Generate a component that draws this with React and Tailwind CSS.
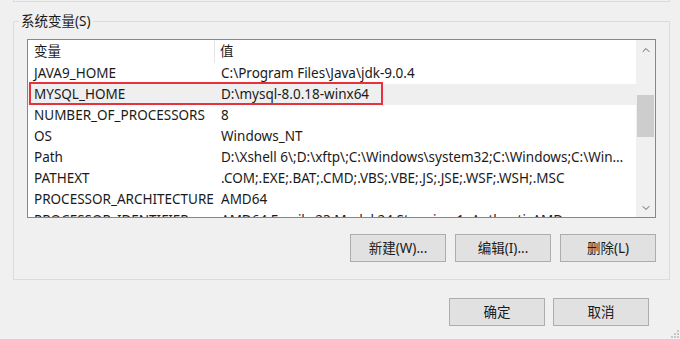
import { ChevronUp, ChevronDown } from 'lucide-react'

const ROWS = [
  ['JAVA9_HOME', 'C:\\Program Files\\Java\\jdk-9.0.4'],
  ['MYSQL_HOME', 'D:\\mysql-8.0.18-winx64'],
  ['NUMBER_OF_PROCESSORS', '8'],
  ['OS', 'Windows_NT'],
  ['Path', 'D:\\Xshell 6\\;D:\\xftp\\;C:\\Windows\\system32;C:\\Windows;C:\\Windows\\System32\\Wbem;C:\\Windows\\System32\\WindowsPowerShell'],
  ['PATHEXT', '.COM;.EXE;.BAT;.CMD;.VBS;.VBE;.JS;.JSE;.WSF;.WSH;.MSC'],
  ['PROCESSOR_ARCHITECTURE', 'AMD64'],
  ['PROCESSOR_IDENTIFIER', 'AMD64 Family 23 Model 24 Stepping 1, AuthenticAMD'],
]

function WinButton({ children }) {
  return (
    <button className="h-[28px] w-[96px] border border-[#adadad] bg-[#e1e1e1] text-[13.5px] text-[#1a1a1a]">
      {children}
    </button>
  )
}

export default function App() {
  return (
    <div
      className="relative h-[339px] w-[680px] overflow-hidden bg-[#f0f0f0] text-[13.5px] text-[#1a1a1a]"
      style={{ fontFamily: '"Noto Sans", "Noto Sans CJK SC", sans-serif' }}
    >
      {/* bottom edge of the group above */}
      <div className="ml-[13px] h-[2px] w-[657px] border-x border-b border-[#dcdcdc]" />

      {/* system variables group */}
      <div className="relative ml-[13px] mt-[19px] h-[259px] w-[657px] border border-[#dcdcdc] px-[13px] pt-[17px]">
        <span className="absolute left-[5px] top-[-11px] bg-[#f0f0f0] px-[2px] leading-[20px]">系统变量(S)</span>

        <div className="flex h-[179px] w-[629px] border border-[#828790] bg-white">
          <div className="relative w-[608px] overflow-hidden">
            <div className="flex h-[23px] items-center">
              <div className="flex h-full w-[187px] items-center border-r border-[#e5e5e5] pl-[6px]">变量</div>
              <div className="pl-[5px]">值</div>
            </div>
            {ROWS.map(([name, value]) => (
              <div
                key={name}
                className={`flex h-[21px] items-center ${name === 'MYSQL_HOME' ? 'bg-[#efefef]' : ''}`}
              >
                <div className="w-[188px] shrink-0 truncate pl-[6px]">{name}</div>
                <div className="min-w-0 truncate pl-[5px] pr-[6px]">{value}</div>
              </div>
            ))}
            <div className="absolute left-[1px] top-[42px] h-[23px] w-[354px] border-2 border-[#e5323c]" />
          </div>

          <div className="flex w-[19px] flex-col items-center bg-[#f0f0f0]">
            <div className="flex h-[19px] w-full items-center justify-center text-[#606060]">
              <ChevronUp size={12} strokeWidth={2} />
            </div>
            <div className="flex-1 w-full px-[1px]">
              <div className="mt-[36px] h-[42px] w-full bg-[#cdcdcd]" />
            </div>
            <div className="flex h-[19px] w-full items-center justify-center text-[#606060]">
              <ChevronDown size={12} strokeWidth={2} />
            </div>
          </div>
        </div>

        <div className="mt-[16px] flex justify-end gap-[9px]">
          <WinButton>新建(W)...</WinButton>
          <WinButton>编辑(I)...</WinButton>
          <WinButton>删除(L)</WinButton>
        </div>
      </div>

      <div className="mt-[18px] flex w-[649px] justify-end gap-[8px]">
        <WinButton>确定</WinButton>
        <WinButton>取消</WinButton>
      </div>

      {/* size grip */}
      <svg className="absolute bottom-[1px] right-[1px]" width="8" height="8" viewBox="0 0 8 8">
        <rect x="6" y="0" width="2" height="2" fill="#c8c8c8" />
        <rect x="3" y="3" width="2" height="2" fill="#c8c8c8" />
        <rect x="6" y="3" width="2" height="2" fill="#c8c8c8" />
        <rect x="0" y="6" width="2" height="2" fill="#c8c8c8" />
        <rect x="3" y="6" width="2" height="2" fill="#c8c8c8" />
        <rect x="6" y="6" width="2" height="2" fill="#c8c8c8" />
      </svg>
    </div>
  )
}
